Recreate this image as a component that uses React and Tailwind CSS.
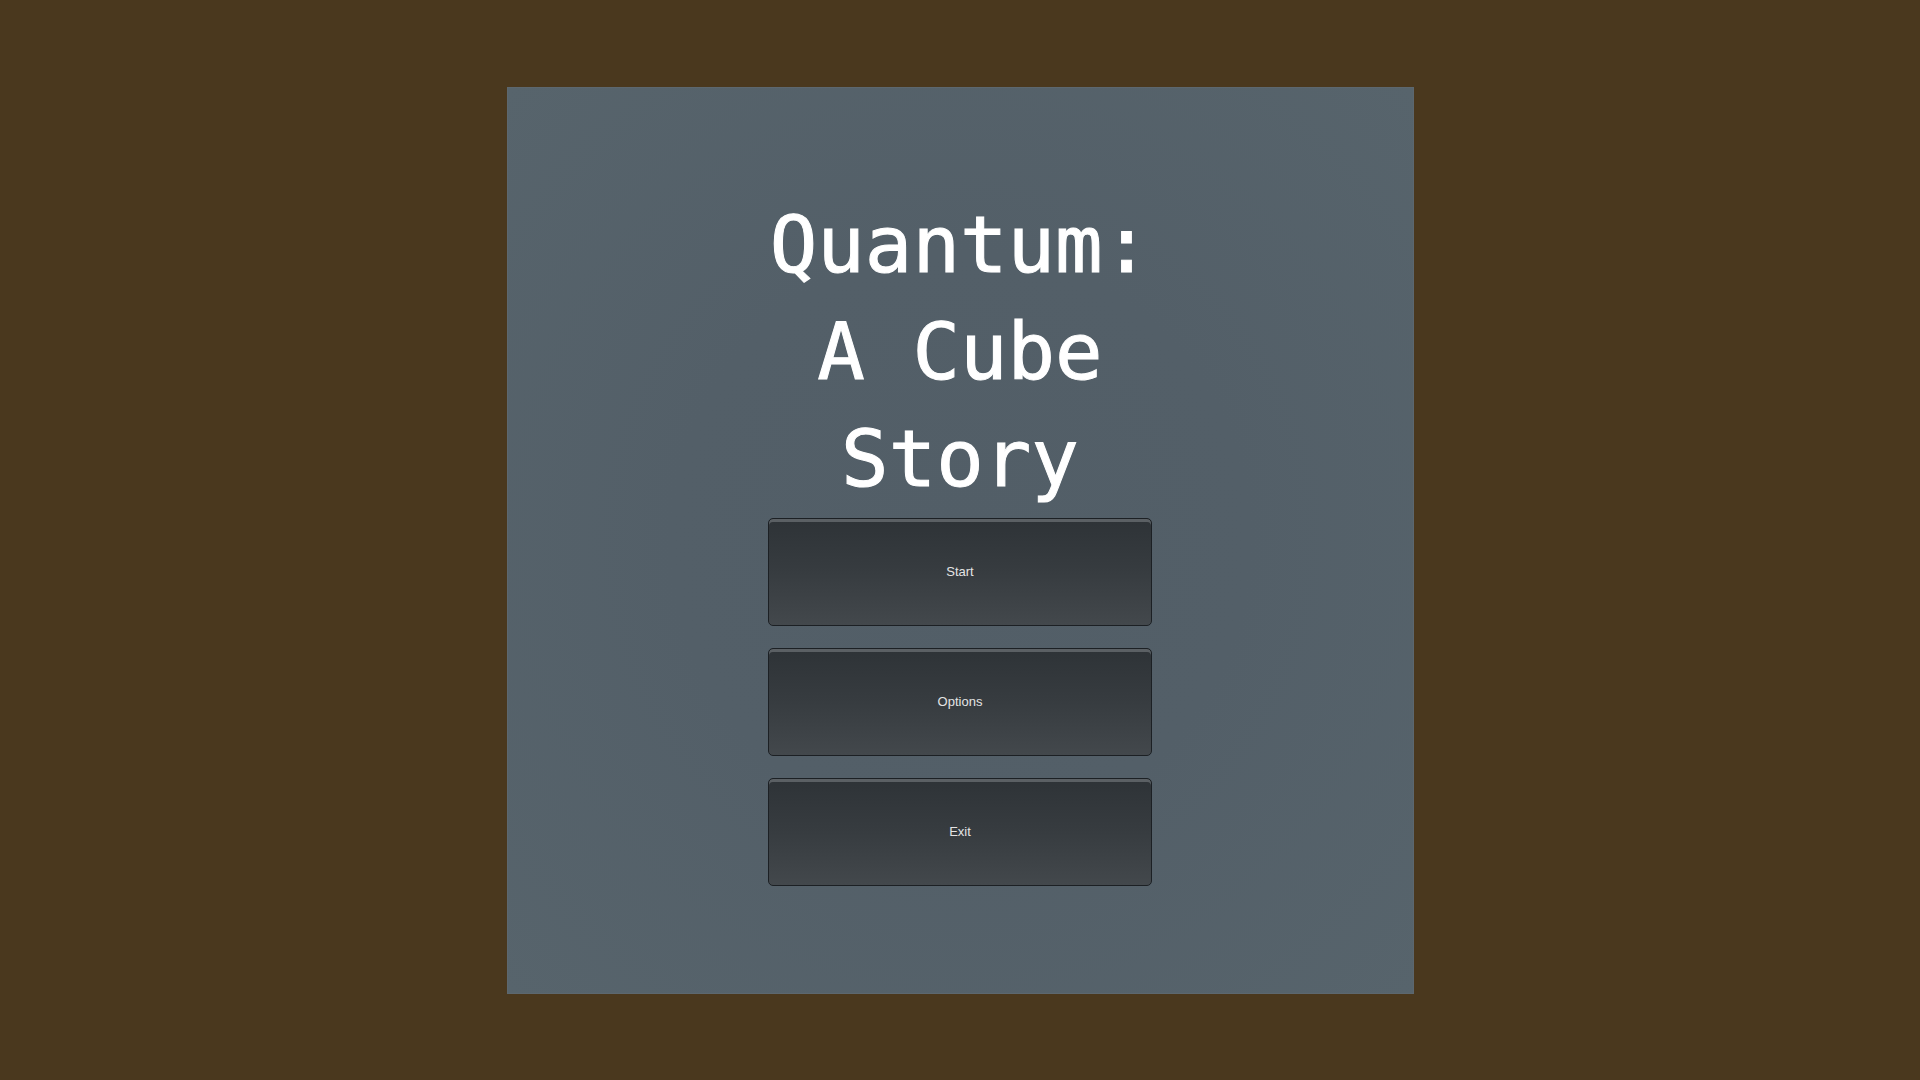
import React from 'react';

const buttons = ['Start', 'Options', 'Exit'];

function MenuButton({ label }) {
  return (
    <button className="w-[384px] h-[108px] rounded-[5px] border border-[#1c2024] bg-gradient-to-b from-[#2e3337] via-[#373c40] to-[#43484c] shadow-[inset_0_3px_0_#5b6064] flex items-center justify-center text-[13px] text-[#e4e4e4] font-['Liberation_Sans',Arial,sans-serif]">
      {label}
    </button>
  );
}

export default function App() {
  return (
    <div className="w-full h-screen bg-[#4a381e] flex items-center justify-center">
      <div className="w-[907px] h-[907px] border border-[#5d676e] bg-[radial-gradient(circle_at_50%_50%,#525e67_0%,#535f68_45%,#57646c_100%)] flex flex-col items-center pt-[104px]">
        <h1 className="text-white text-[79px] leading-[107px] text-center font-['DejaVu_Sans_Mono','Liberation_Mono',monospace] w-[420px] [-webkit-text-stroke:1px_white]">
          Quantum:
          <br />
          A Cube
          <br />
          Story
        </h1>
        <div className="flex flex-col gap-[22px] mt-[5px]">
          {buttons.map((b) => (
            <MenuButton key={b} label={b} />
          ))}
        </div>
      </div>
    </div>
  );
}
